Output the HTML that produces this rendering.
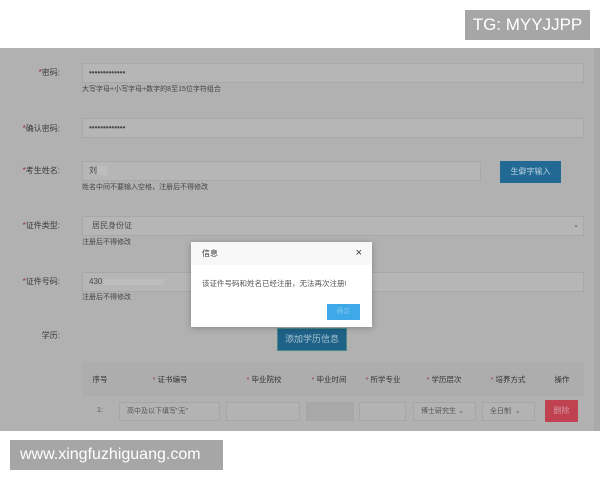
<!DOCTYPE html>
<html><head><meta charset="utf-8"><style>
*{margin:0;padding:0;box-sizing:border-box}
body{width:600px;height:480px;background:#fff;position:relative;overflow:hidden;font-family:"Liberation Sans","Noto Sans CJK SC",sans-serif}
.a{position:absolute}
.page{left:0;top:48px;width:600px;height:383px;background:#b1b1b1}
.edge{left:594px;top:48px;width:6px;height:383px;background:#a9a9a9}
.lbl{font-size:8px;color:#3a3a3a;text-align:right;width:60px;left:0;line-height:10px}
.lbl b{color:#8a2a3a;font-weight:normal}
.in{background:#b6b6b6;border:1px solid #a8a8a8;font-size:8px;color:#4a4a4a;line-height:17px;padding-left:6px}
.hint{font-size:7px;color:#444;line-height:9px;left:82px}
.th{font-size:7.5px;color:#333;line-height:10px;top:375px;transform:translateX(-50%);white-space:nowrap}
.th b{color:#a03a4a;font-weight:normal}
.cell{background:#b3b3b3;border:1px solid #a6a6a6;top:402px;height:19px;font-size:7px;color:#555;line-height:17px;padding-left:7px}
</style></head><body>
<div class="a" style="left:465px;top:10px;width:125px;height:30px;background:#a6a6a6;color:#fff;font-size:17px;line-height:30px;text-align:center">TG: MYYJJPP</div>
<div class="a page"></div>
<div class="a edge"></div>

<div class="a lbl" style="top:68px"><b>*</b>密码:</div>
<div class="a in" style="left:82px;top:63px;width:502px;height:20px;font-weight:bold">•••••••••••••</div>
<div class="a hint" style="top:85px">大写字母+小写字母+数字的8至15位字符组合</div>

<div class="a lbl" style="top:124px"><b>*</b>确认密码:</div>
<div class="a in" style="left:82px;top:118px;width:502px;height:20px;font-weight:bold">•••••••••••••</div>

<div class="a lbl" style="top:166px"><b>*</b>考生姓名:</div>
<div class="a in" style="left:82px;top:161px;width:399px;height:20px">刘<span style="display:inline-block;width:10px;height:9px;background:#bdbdbd;vertical-align:middle"></span></div>
<div class="a" style="left:500px;top:161px;width:61px;height:22px;background:#226a93;color:#b8cfe0;font-size:8px;line-height:22px;text-align:center">生僻字输入</div>
<div class="a hint" style="top:183px">姓名中间不要输入空格，注册后不得修改</div>

<div class="a lbl" style="top:221px"><b>*</b>证件类型:</div>
<div class="a in" style="left:82px;top:216px;width:502px;height:20px;padding-left:9px">居民身份证<span style="position:absolute;right:4px;font-size:7px">⌄</span></div>
<div class="a hint" style="top:238px">注册后不得修改</div>

<div class="a lbl" style="top:277px"><b>*</b>证件号码:</div>
<div class="a in" style="left:82px;top:272px;width:502px;height:20px">430<span style="display:inline-block;width:60px;height:6px;background:#bdbdbd;vertical-align:middle;margin-left:2px"></span></div>
<div class="a hint" style="top:293px">注册后不得修改</div>

<div class="a lbl" style="top:331px">学历:</div>
<div class="a" style="left:277px;top:328px;width:70px;height:23px;background:#1f6287;border:1px solid #4a8a8a;color:#a9c3d3;font-size:9px;line-height:21px;text-align:center">添加学历信息</div>

<div class="a" style="left:82px;top:362px;width:502px;height:63px;background:#adadad;border-radius:4px"></div>
<div class="a" style="left:82px;top:396px;width:502px;height:29px;background:#b1b1b1"></div>
<div class="a th" style="left:100px">序号</div>
<div class="a th" style="left:170px"><b>*</b> 证书编号</div>
<div class="a th" style="left:264px"><b>*</b> 毕业院校</div>
<div class="a th" style="left:329px"><b>*</b> 毕业时间</div>
<div class="a th" style="left:383px"><b>*</b> 所学专业</div>
<div class="a th" style="left:444px"><b>*</b> 学历层次</div>
<div class="a th" style="left:508px"><b>*</b> 培养方式</div>
<div class="a th" style="left:562px">操作</div>
<div class="a" style="left:97px;top:407px;font-size:7px;color:#555">1:</div>
<div class="a cell" style="left:119px;width:101px">高中及以下填写"无"</div>
<div class="a cell" style="left:226px;width:74px"></div>
<div class="a cell" style="left:306px;width:48px;background:#a8a8a8"></div>
<div class="a cell" style="left:359px;width:47px"></div>
<div class="a cell" style="left:413px;width:63px">博士研究生 ⌄</div>
<div class="a cell" style="left:482px;width:53px">全日制 &nbsp;⌄</div>
<div class="a" style="left:545px;top:400px;width:33px;height:22px;background:#c04150;color:#d59aa2;font-size:8px;line-height:22px;text-align:center;border-radius:1px">删除</div>

<div class="a" style="left:191px;top:242px;width:181px;height:85px;background:#fff;box-shadow:0 1px 6px rgba(0,0,0,.25)">
 <div style="height:23px;background:#f8f8f8;font-size:8px;color:#333;line-height:23px;padding-left:11px;position:relative">信息<span style="position:absolute;right:10px;top:0;font-size:11px">×</span></div>
 <div style="font-size:7.5px;color:#555;padding:13px 0 0 11px">该证件号码和姓名已经注册，无法再次注册!</div>
 <div style="position:absolute;left:136px;top:62px;width:33px;height:16px;background:#3da9e8;color:#7cc4ee;font-size:7px;line-height:16px;text-align:center">确定</div>
</div>

<div class="a" style="left:10px;top:440px;width:213px;height:30px;background:#a6a6a6;color:#fff;font-size:16px;line-height:30px;padding-left:10px">www.xingfuzhiguang.com</div>
</body></html>
